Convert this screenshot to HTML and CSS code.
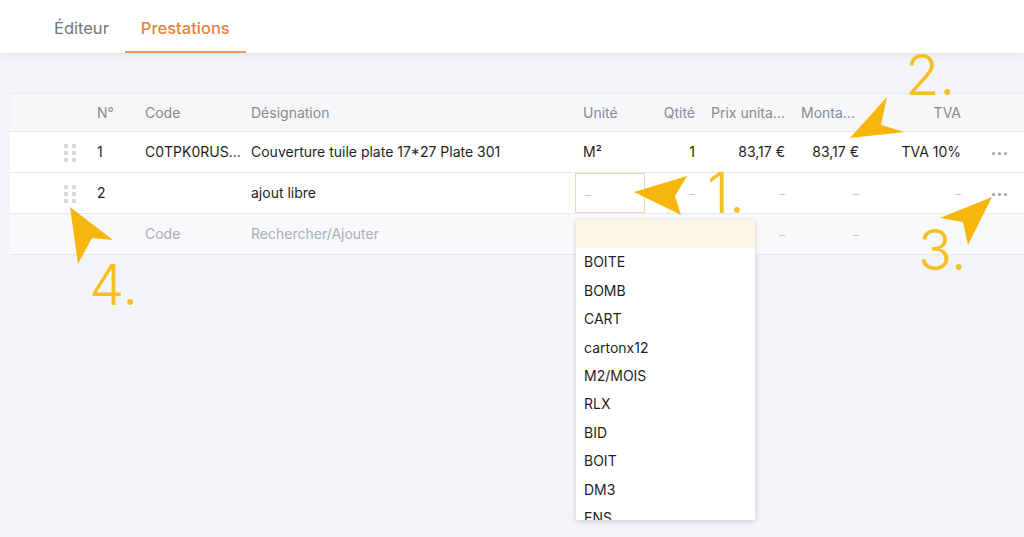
FILE: index.html
```html
<!DOCTYPE html>
<html lang="fr">
<head>
<meta charset="UTF-8" />
<meta name="viewport" content="width=device-width, initial-scale=1" />
<title>Prestations</title>
<link rel="stylesheet" href="styles.css">
</head>
<body>
  <header class="tabs">
    <a class="tab" href="#">Éditeur</a>
    <a class="tab active" href="#">Prestations</a>
  </header>

  <main class="sheet">
    <div class="table" role="table">
      <div class="row head" role="row">
        <div class="cell"></div>
        <div class="cell">N°</div>
        <div class="cell">Code</div>
        <div class="cell">Désignation</div>
        <div class="cell">Unité</div>
        <div class="cell num">Qtité</div>
        <div class="cell" title="Prix unitaire HT">Prix unita...</div>
        <div class="cell" title="Montant HT">Monta...</div>
        <div class="cell num">TVA</div>
        <div class="cell"></div>
      </div>

      <div class="row" role="row">
        <div class="cell handle"><span class="grip"><i></i><i></i><i></i><i></i><i></i><i></i></span></div>
        <div class="cell">1</div>
        <div class="cell" title="C0TPK0RUSTPL301">C0TPK0RUS...</div>
        <div class="cell">Couverture tuile plate 17*27 Plate 301</div>
        <div class="cell">M²</div>
        <div class="cell num">1</div>
        <div class="cell num">83,17 €</div>
        <div class="cell num">83,17 €</div>
        <div class="cell num">TVA 10%</div>
        <div class="cell more"><span class="dots"><i></i><i></i><i></i></span></div>
      </div>

      <div class="row" role="row">
        <div class="cell handle"><span class="grip"><i></i><i></i><i></i><i></i><i></i><i></i></span></div>
        <div class="cell">2</div>
        <div class="cell"></div>
        <div class="cell">ajout libre</div>
        <div class="cell unit-edit"><span class="dash">–</span></div>
        <div class="cell num"><span class="dash">–</span></div>
        <div class="cell num"><span class="dash">–</span></div>
        <div class="cell num"><span class="dash">–</span></div>
        <div class="cell num"><span class="dash">–</span></div>
        <div class="cell more"><span class="dots"><i></i><i></i><i></i></span></div>
      </div>

      <div class="row new" role="row">
        <div class="cell"></div>
        <div class="cell"></div>
        <div class="cell muted">Code</div>
        <div class="cell muted">Rechercher/Ajouter</div>
        <div class="cell"></div>
        <div class="cell"></div>
        <div class="cell num"><span class="dash">–</span></div>
        <div class="cell num"><span class="dash">–</span></div>
        <div class="cell"></div>
        <div class="cell"></div>
      </div>
    </div>

    <ul class="dropdown" role="listbox">
      <li class="selected"></li>
      <li>BOITE</li>
      <li>BOMB</li>
      <li>CART</li>
      <li>cartonx12</li>
      <li>M2/MOIS</li>
      <li>RLX</li>
      <li>BID</li>
      <li>BOIT</li>
      <li>DM3</li>
      <li>ENS</li>
    </ul>
  </main>

  <!-- annotations drawn on top of the screenshot -->
  <svg class="marks" viewBox="0 0 1024 537" width="1024" height="537" aria-hidden="true">
    <polygon points="634,192 687,176 675,196 681,215" />
    <polygon points="850,138 887,97 881,125 905,132" />
    <polygon points="992,197 940,218 963,222 968,245" />
    <polygon points="70,207 113,240 92,238 78,264" />
    <text x="707" y="213">1.</text>
    <text x="905" y="95">2.</text>
    <text x="918" y="270">3.</text>
    <text x="89" y="305">4.</text>
  </svg>
</body>
</html>
```

FILE: styles.css
```css
* {
  box-sizing: border-box;
}

body {
  margin: 0;
  height: 537px;
  overflow: hidden;
  font-family: 'Inter', 'Liberation Sans', sans-serif;
  font-size: 14px;
  background: #f2f4f7;
  color: #1f1f1f;
  position: relative;
}

.tabs {
  height: 53px;
  background: #fff;
  display: flex;
  padding-left: 38px;
  box-shadow: 0 2px 6px rgba(0,0,0,0.07);
  position: relative;
  z-index: 1;
}

.tab {
  display: flex;
  align-items: center;
  padding: 4px 16px 0;
  font-size: 16.5px;
  color: #707580;
  text-decoration: none;
  border-bottom: 2px solid transparent;
}

.tab.active {
  color: #e0833f;
  font-weight: 500;
  border-bottom-color: #e79a60;
}

.sheet {
  padding: 40px 0 0 10px;
}

.table {
  width: 1030px;
  border-top: 1px solid #e8eaee;
}

.row {
  display: grid;
  grid-template-columns: 79px 48px 106px 332px 70px 58px 90px 74px 102px 60px;
  height: 41px;
  background: #fff;
  border-bottom: 1px solid #e6e8ec;
}

.row.head {
  height: 38px;
  background: #f6f7f9;
  color: #868b94;
}

.row.new {
  background: #f8f9fb;
}

.cell {
  display: block;
  padding: 0 8px;
  line-height: 40px;
  white-space: nowrap;
  overflow: hidden;
  min-width: 0;
}

.row.head .cell {
  line-height: 37px;
}

.num {
  text-align: right;
}

.muted {
  color: #a9adb4;
}

.dash {
  color: #c6cad0;
  font-size: 12px;
}

.handle {
  text-align: right;
  padding-right: 13px;
}

.grip {
  display: inline-grid;
  grid-template-columns: 4px 4px;
  gap: 3px 4px;
  vertical-align: middle;
}

.grip i {
  width: 4px;
  height: 4px;
  background: #d6d9de;
}

.more {
  text-align: center;
}

.dots {
  display: inline-flex;
  gap: 3px;
  vertical-align: middle;
}

.dots i {
  width: 3px;
  height: 3px;
  border-radius: 50%;
  background: #9aa0a8;
}

.unit-edit {
  border: 1px solid #f1d9a3;
  padding-left: 9px;
}

.dropdown {
  position: absolute;
  left: 576px;
  top: 220px;
  width: 179px;
  height: 300px;
  margin: 0;
  padding: 0;
  list-style: none;
  background: #fff;
  overflow: hidden;
  box-shadow: 0 1px 5px rgba(0,0,0,0.18);
  z-index: 2;
}

.dropdown li {
  height: 28.4px;
  line-height: 28.4px;
  padding: 0 8px;
  color: #1f1f1f;
}

.dropdown li.selected {
  background: #fdf5e5;
}

.marks {
  position: absolute;
  left: 0;
  top: 0;
  z-index: 3;
  pointer-events: none;
}

.marks polygon {
  fill: #f6b60c;
}

.marks text {
  fill: #f6bf22;
  font-family: 'Inter', 'Liberation Sans', sans-serif;
  font-weight: 300;
  font-size: 56px;
}
```
